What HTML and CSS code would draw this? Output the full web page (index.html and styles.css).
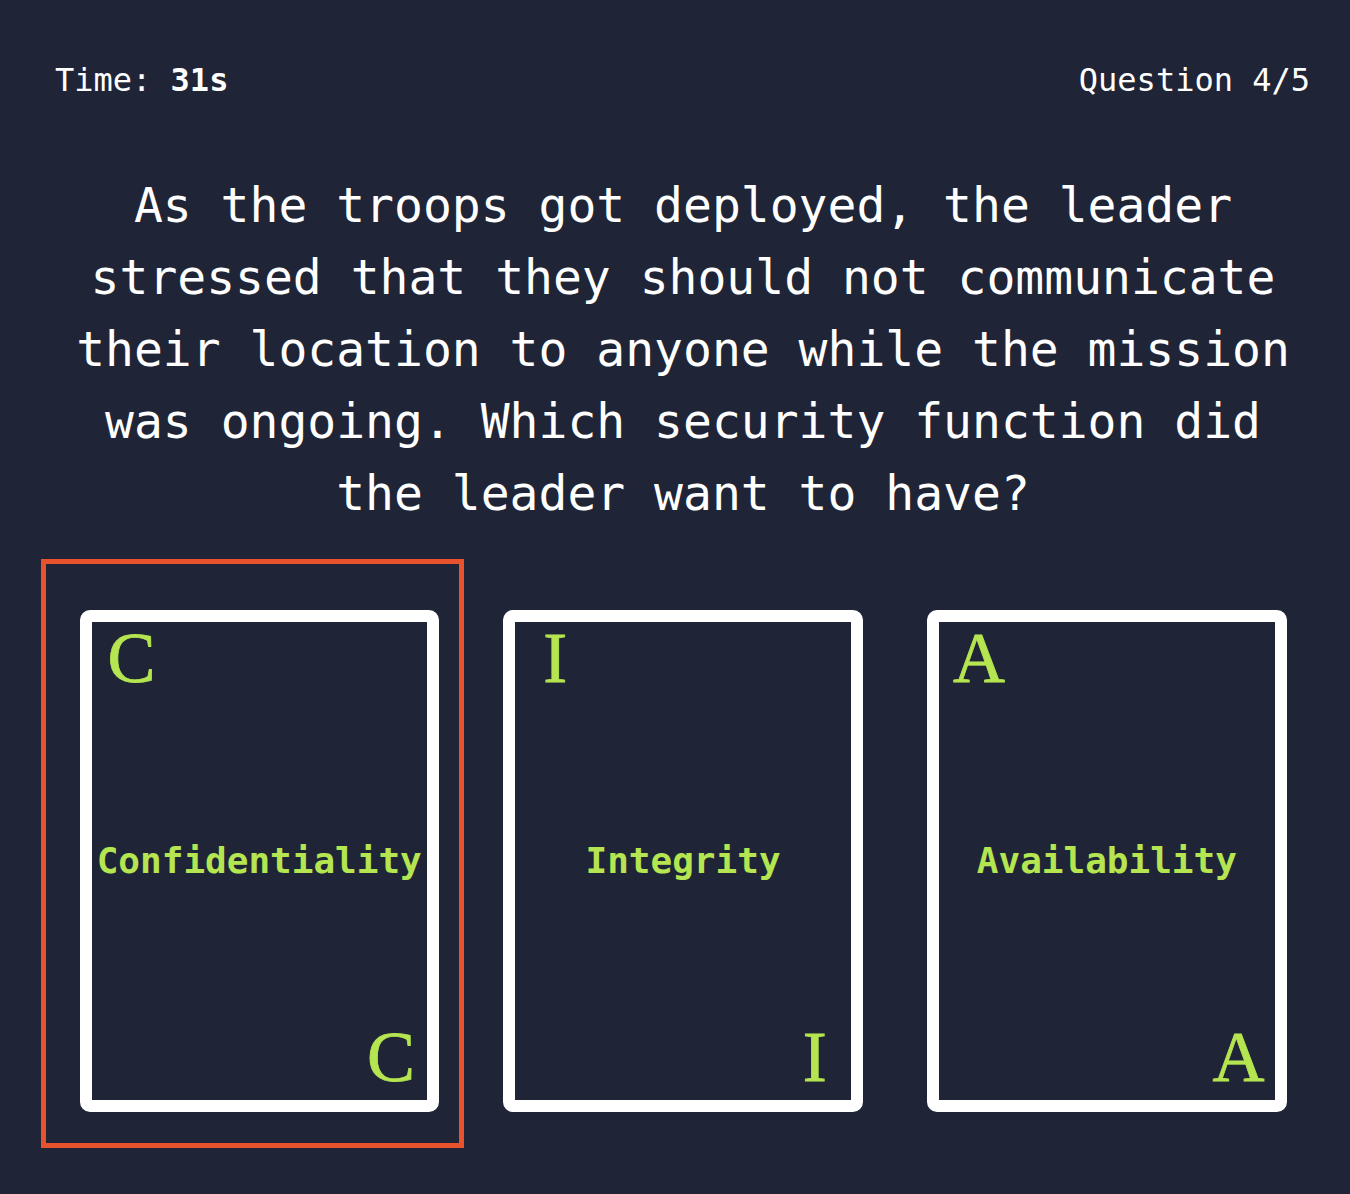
FILE: index.html
```html
<!DOCTYPE html>
<html lang="en">
<head>
<meta charset="utf-8">
<title>Quiz</title>
<link rel="stylesheet" href="styles.css">
</head>
<body>
<main class="page">
  <header class="topbar">
    <div class="timer">Time: <strong>31s</strong></div>
    <div class="counter">Question 4/5</div>
  </header>
  <p class="question">As the troops got deployed, the leader stressed that they should not communicate their location to anyone while the mission was ongoing. Which security function did the leader want to have?</p>
  <section class="cards">
    <div class="card selected">
      <span class="corner top">C</span>
      <span class="label">Confidentiality</span>
      <span class="corner bottom">C</span>
    </div>
    <div class="card">
      <span class="corner top">I</span>
      <span class="label">Integrity</span>
      <span class="corner bottom">I</span>
    </div>
    <div class="card">
      <span class="corner top">A</span>
      <span class="label">Availability</span>
      <span class="corner bottom">A</span>
    </div>
  </section>
</main>
</body>
</html>
```
FILE: styles.css
```css
html, body {
  margin: 0;
  padding: 0;
  background: #1f2537;
}
body {
  width: 1350px;
  height: 1194px;
  overflow: hidden;
  font-family: "DejaVu Sans Mono", monospace;
  color: #ffffff;
}
.page {
  padding: 56px 40px 0 55px;
}
.topbar {
  display: flex;
  justify-content: space-between;
  font-size: 32px;
  line-height: 48px;
}
.topbar strong {
  font-weight: bold;
}
.question {
  margin: 65px 0 0 -7px;
  width: 1270px;
  text-align: center;
  font-size: 48px;
  line-height: 72px;
}
.cards {
  display: flex;
  gap: 64.3px;
  margin-top: 81px;
  margin-left: 24.5px;
}
.card {
  position: relative;
  box-sizing: border-box;
  width: 359.5px;
  height: 502px;
  border: 12px solid #ffffff;
  border-radius: 10px;
  display: grid;
  grid-template-rows: 1fr auto 1fr;
  color: #b5e550;
}
.card.selected::after {
  content: "";
  position: absolute;
  top: -63px;
  left: -51px;
  right: -37px;
  bottom: -48px;
  border: 5px solid #e8532d;
  pointer-events: none;
}
.corner {
  font-family: "Liberation Serif", "Times New Roman", serif;
  font-size: 72px;
  line-height: 72px;
  text-align: center;
  -webkit-text-stroke: 0.8px #b5e550;
}
.corner.top {
  width: 80px;
  justify-self: start;
  align-self: start;
}
.corner.bottom {
  width: 72px;
  justify-self: end;
  align-self: end;
  margin-bottom: 7px;
}
.label {
  justify-self: center;
  font-weight: bold;
  font-size: 36px;
  line-height: 44px;
  white-space: nowrap;
}
```
